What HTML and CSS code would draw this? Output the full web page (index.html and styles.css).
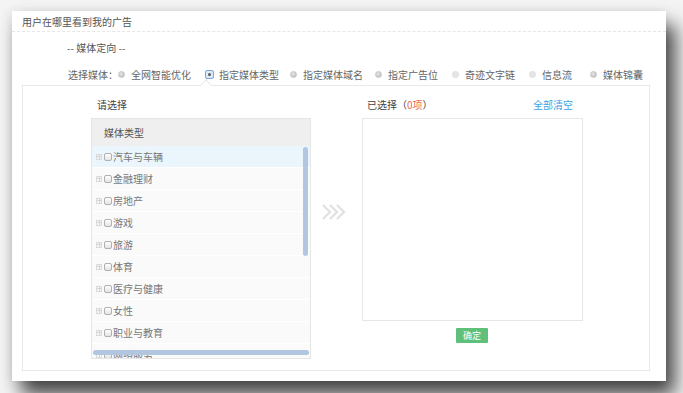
FILE: index.html
```html
<!DOCTYPE html>
<html lang="zh">
<head>
<meta charset="utf-8">
<link rel="stylesheet" href="styles.css">
</head>
<body>
<div class="card">
  <div class="card-head">用户在哪里看到我的广告</div>
  <div class="section-title">-- 媒体定向 --</div>
  <div class="radio-row">
    <span class="row-label">选择媒体：</span>
    <label class="radio"><i class="dot"></i>全网智能优化</label>
    <label class="radio on"><i class="dot"></i>指定媒体类型</label>
    <label class="radio"><i class="dot"></i>指定媒体域名</label>
    <label class="radio"><i class="dot"></i>指定广告位</label>
    <label class="radio dim"><i class="dot"></i>奇迹文字链</label>
    <label class="radio dim"><i class="dot"></i>信息流</label>
    <label class="radio"><i class="dot"></i>媒体锦囊</label>
  </div>
  <div class="panel">
    <span class="tip"></span>
    <div class="col-left">
      <div class="col-head">请选择</div>
      <div class="list-box">
        <div class="list-title">媒体类型</div>
        <div class="list">
          <div class="item hl"><i class="plus"></i><i class="chk"></i>汽车与车辆</div>
          <div class="item"><i class="plus"></i><i class="chk"></i>金融理财</div>
          <div class="item"><i class="plus"></i><i class="chk"></i>房地产</div>
          <div class="item"><i class="plus"></i><i class="chk"></i>游戏</div>
          <div class="item"><i class="plus"></i><i class="chk"></i>旅游</div>
          <div class="item"><i class="plus"></i><i class="chk"></i>体育</div>
          <div class="item"><i class="plus"></i><i class="chk"></i>医疗与健康</div>
          <div class="item"><i class="plus"></i><i class="chk"></i>女性</div>
          <div class="item"><i class="plus"></i><i class="chk"></i>职业与教育</div>
          <div class="item"><i class="plus"></i><i class="chk"></i>网络服务</div>
        </div>
        <span class="vbar"></span>
        <span class="hbar"></span>
      </div>
    </div>
    <div class="col-mid">
      <svg width="26" height="16" viewBox="0 0 26 16"><g fill="none" stroke="#e2e2e2" stroke-width="2.4"><polyline points="1,1 8,8 1,15"/><polyline points="8,1 15,8 8,15"/><polyline points="15,1 22,8 15,15"/></g></svg>
    </div>
    <div class="col-right">
      <div class="col-head right-head"><span>已选择（<em>0项</em>）</span><a class="clear">全部清空</a></div>
      <div class="sel-box"></div>
      <div class="btn-row"><button class="btn">确定</button></div>
    </div>
  </div>
</div>
</body>
</html>
```
FILE: styles.css
```css
* { box-sizing: border-box; }
html, body { margin: 0; padding: 0; }
body {
  width: 683px; height: 393px; overflow: hidden;
  background: #f4f4f4;
  font-family: "Noto Sans CJK SC", "Noto Sans", sans-serif;
  font-size: 10px; color: #666;
}
.card {
  margin: 11px 0 0 12px;
  width: 654px; height: 370px;
  background: #fff;
  box-shadow: 9px 14px 18px rgba(0,0,0,0.72), -2px 0 10px rgba(0,0,0,0.08);
  display: flex; flex-direction: column;
}
.card-head {
  height: 21px; line-height: 21px;
  padding-left: 10px;
  border-bottom: 1px dashed #e6e6e6;
  color: #555;
}
.section-title {
  margin: 8px 0 0 55px; height: 16px; line-height: 16px; color: #555;
}
.radio-row {
  display: flex; align-items: center;
  margin: 10px 0 0 56px; height: 16px;
}
.row-label { width: 50px; color: #666; }
.radio { display: flex; align-items: center; color: #666; }
.radio .dot {
  width: 7px; height: 7px; border-radius: 50%;
  background: radial-gradient(circle at 40% 35%, #e6e6e6, #b9b9b9);
  border: 1px solid #c4c4c4; margin-right: 6px;
}
.radio.dim .dot { background: #e6e6e6; border-color: #dedede; }
.radio.on .dot {
  width: 9px; height: 9px; border-radius: 2px;
  background: #dbe9f8; border: 1px solid #7aa7d8;
  position: relative; margin-right: 5px;
}
.radio.on .dot::after {
  content: ""; position: absolute; left: 2px; top: 2px;
  width: 3px; height: 3px; border-radius: 50%; background: #555;
}
.radio:nth-of-type(1) { width: 87px; }
.radio:nth-of-type(2) { width: 85px; }
.radio:nth-of-type(3) { width: 85px; }
.radio:nth-of-type(4) { width: 77px; }
.radio:nth-of-type(5) { width: 77px; }
.radio:nth-of-type(6) { width: 61px; }

.panel {
  position: relative;
  margin: 3px 16px 0 10px;
  height: 286px;
  border: 1px solid #e8e8e8;
  display: flex;
  padding: 9px 0 0 68px;
}
.tip {
  position: absolute; top: -5px; left: 179px;
  width: 8px; height: 8px; background: #fff;
  border-left: 1px solid #e8e8e8; border-top: 1px solid #e8e8e8;
  transform: rotate(45deg);
}
.col-head { height: 19px; line-height: 19px; color: #444; padding-left: 6px; }
.col-left { width: 220px; }
.list-box {
  position: relative; margin-top: 4px;
  height: 241px; border: 1px solid #e6e6e6; overflow: hidden;
}
.list-title {
  height: 27px; line-height: 27px; background: #efefef;
  padding-left: 12px; color: #555;
}
.item {
  height: 22px; line-height: 21px;
  display: flex; align-items: center;
  background: #fafafa; border-bottom: 1px solid #fff;
  padding-left: 4px; color: #777;
}
.item.hl { background: #eaf6fb; }
.plus {
  width: 6px; height: 6px; border: 1px solid #dadada; margin-right: 2px;
  position: relative;
}
.plus::before { content: ""; position: absolute; left: 0; top: 1.5px; width: 4px; height: 1px; background: #d4d4d4; }
.plus::after { content: ""; position: absolute; left: 1.5px; top: 0; width: 1px; height: 4px; background: #d4d4d4; }
.chk {
  width: 8px; height: 8px; border: 1px solid #b0b0b0; border-radius: 2px;
  background: linear-gradient(#fff, #e4e4e4); margin-right: 1px;
}
.vbar {
  position: absolute; right: 2px; top: 28px;
  width: 5px; height: 109px; border-radius: 3px; background: #b3c6e0;
}
.hbar {
  position: absolute; left: 1px; right: 1px; bottom: 3px;
  height: 5px; border-radius: 3px; background: #b3c6e0;
}
.col-mid { width: 51px; display: flex; justify-content: center; padding: 109px 4px 0 0; }
.col-mid svg { display: block; }
.col-right { width: 221px; }
.right-head { display: flex; justify-content: space-between; padding-right: 10px; padding-left: 5px; }
.right-head em { font-style: normal; color: #f0694a; }
.clear { color: #3ba2e6; }
.sel-box { margin-top: 4px; height: 203px; border: 1px solid #e6e6e6; }
.btn-row { display: flex; justify-content: center; padding-top: 7px; }
.btn {
  width: 32px; height: 15px; padding: 0; border: 0; border-radius: 1px;
  background: #5fc079; color: #fff; font: inherit; font-size: 9px; line-height: 15px;
  margin-left: -1px;
}
```
